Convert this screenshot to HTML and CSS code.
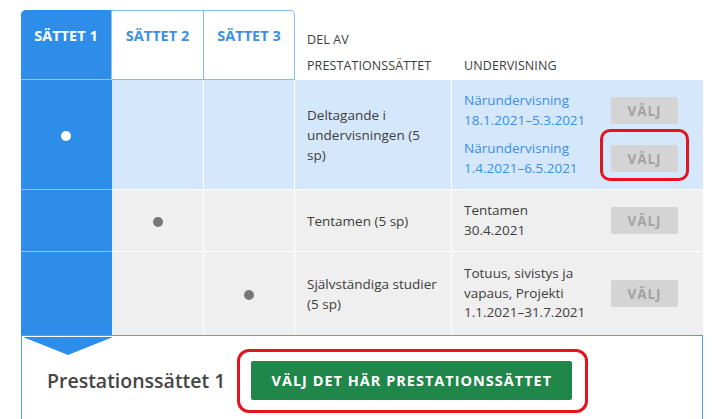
FILE: index.html
```html
<!DOCTYPE html>
<html lang="sv">
<head>
<meta charset="utf-8">
<title>Prestationssätt</title>
<link rel="stylesheet" href="styles.css">
</head>
<body>
<div class="page">
  <table class="methods">
    <colgroup>
      <col class="c-mark1"><col class="c-mark2"><col class="c-mark3"><col class="c-part"><col class="c-teach">
    </colgroup>
    <thead>
      <tr>
        <th class="tab tab-active">SÄTTET 1</th>
        <th class="tab tab-mid">SÄTTET 2</th>
        <th class="tab tab-last">SÄTTET 3</th>
        <th class="col-head">DEL AV<br>PRESTATIONSSÄTTET</th>
        <th class="col-head">UNDERVISNING</th>
      </tr>
    </thead>
    <tbody>
      <tr class="row row-selected row-1">
        <td class="mark mark-active"><span class="dot dot-white"></span></td>
        <td class="mark"></td>
        <td class="mark"></td>
        <td class="part">Deltagande i undervisningen (5 sp)</td>
        <td class="teach">
          <div class="session">
            <div class="session-text link">Närundervisning<br>18.1.2021–5.3.2021</div>
            <button class="pick">VÄLJ</button>
          </div>
          <div class="session">
            <div class="session-text link">Närundervisning<br>1.4.2021–6.5.2021</div>
            <span class="marked marked-small"><button class="pick">VÄLJ</button></span>
          </div>
        </td>
      </tr>
      <tr class="row row-2">
        <td class="mark mark-active"></td>
        <td class="mark"><span class="dot"></span></td>
        <td class="mark"></td>
        <td class="part">Tentamen (5 sp)</td>
        <td class="teach">
          <div class="session">
            <div class="session-text">Tentamen<br>30.4.2021</div>
            <button class="pick">VÄLJ</button>
          </div>
        </td>
      </tr>
      <tr class="row row-3">
        <td class="mark mark-active"></td>
        <td class="mark"></td>
        <td class="mark"><span class="dot"></span></td>
        <td class="part">Självständiga studier (5 sp)</td>
        <td class="teach">
          <div class="session">
            <div class="session-text">Totuus, sivistys ja vapaus, Projekti<br>1.1.2021–31.7.2021</div>
            <button class="pick">VÄLJ</button>
          </div>
        </td>
      </tr>
    </tbody>
  </table>
  <div class="panel">
    <span class="pointer"></span>
    <h2 class="panel-title">Prestationssättet 1</h2>
    <span class="marked marked-large"><button class="choose">VÄLJ DET HÄR PRESTATIONSSÄTTET</button></span>
  </div>
</div>
</body>
</html>
```
FILE: styles.css
```css
* { box-sizing: border-box; }
html, body { margin: 0; padding: 0; background: #fff; }
body {
  font-family: "Open Sans", "Noto Sans", "DejaVu Sans", sans-serif;
  color: #3d3d3d;
  font-size: 13px;
}
.page {
  padding: 10px 0 0 21px;
  width: 703px;
}
.methods {
  width: 682px;
  border-collapse: separate;
  border-spacing: 0;
  table-layout: fixed;
}
.c-mark1 { width: 91px; }
.c-mark2 { width: 92px; }
.c-mark3 { width: 91px; }
.c-part { width: 157px; }
.c-teach { width: 251px; }

thead th {
  height: 70px;
  padding: 0;
  font-weight: 400;
}
.tab {
  vertical-align: top;
  padding-top: 15px !important;
  font-size: 14.5px;
  font-weight: 700;
  color: #3a8fe6;
  text-align: center;
  background: #fff;
  border-top: 1px solid #86bdf0;
  border-right: 1px solid #86bdf0;
  border-bottom: 1px solid #86bdf0;
}
.tab-active {
  background: #2e8de8;
  color: #fff;
  border-color: #2e8de8;
  border-bottom-color: #8fc3f2;
  border-right-color: #8fc3f2;
  border-top-left-radius: 5px;
}
.tab-last { border-top-right-radius: 5px; }
.col-head {
  vertical-align: bottom;
  text-align: left;
  padding: 0 0 1px 12px !important;
  line-height: 26px;
  font-size: 12.5px;
  color: #3d3d3d;
  letter-spacing: 0.1px;
}

.row td {
  border-right: 1px solid #fff;
  border-bottom: 1px solid #fff;
  padding: 0;
  vertical-align: middle;
}
.row td:last-child { border-right: none; }
.row { background: #efefef; }
.row-selected { background: #d5e8fb; }
.row-1 td { height: 110px; }
.row-2 td { height: 62px; }
.row-3 td { height: 83px; }
.row-3 td { border-bottom: none; }
.mark { text-align: center; }
.mark-active { background: #2e8de8; }
.row td.mark-active { border-bottom-color: #8fc3f2; border-right-color: #2e8de8; }
.dot {
  display: inline-block;
  width: 10px;
  height: 10px;
  border-radius: 50%;
  background: #777;
  vertical-align: middle;
}
.dot-white { background: #fff; }
.part {
  padding: 0 12px !important;
  line-height: 20px;
  font-size: 13.5px;
}
.teach { padding: 0 25px 0 12px !important; }
.session {
  display: flex;
  align-items: center;
  justify-content: space-between;
  line-height: 19.5px;
  font-size: 13.5px;
}
.session + .session { margin-top: 9px; }
.session-text { width: 140px; }
.link { color: #3a8fe6; }
.pick {
  width: 67px;
  height: 27px;
  border: none;
  border-radius: 2px;
  background: #d4d4d4;
  color: #a3a3a3;
  font-family: inherit;
  font-weight: 700;
  font-size: 13.5px;
  letter-spacing: 1px;
  padding: 0;
}

.marked { position: relative; display: inline-block; line-height: 0; }
.marked::after {
  content: "";
  position: absolute;
  border: 3px solid #e3141f;
  pointer-events: none;
}
.marked-small::after { left: -11px; right: -11px; top: -16px; bottom: -9px; border-radius: 10px; }
.marked-large::after { left: -14px; right: -16px; top: -12px; bottom: -13px; border-radius: 12px; }

.panel {
  position: relative;
  width: 682px;
  height: 110px;
  border: 1px solid #4f9fea;
  display: flex;
  align-items: flex-start;
  padding: 25px 0 0 25px;
  gap: 26px;
}
.pointer {
  position: absolute;
  left: 1px;
  top: 1px;
  width: 90px;
  height: 18px;
  background: #2e8de8;
  clip-path: polygon(0 0, 100% 0, 50% 100%);
}
.panel-title {
  margin: 0;
  font-size: 19.5px;
  font-weight: 600;
  color: #454545;
  line-height: 39px;
}
.choose {
  height: 39px;
  padding: 0 20px;
  border: none;
  border-radius: 2px;
  background: #1f874a;
  color: #fff;
  font-family: inherit;
  font-weight: 700;
  font-size: 14.5px;
  letter-spacing: 1px;
}
```
